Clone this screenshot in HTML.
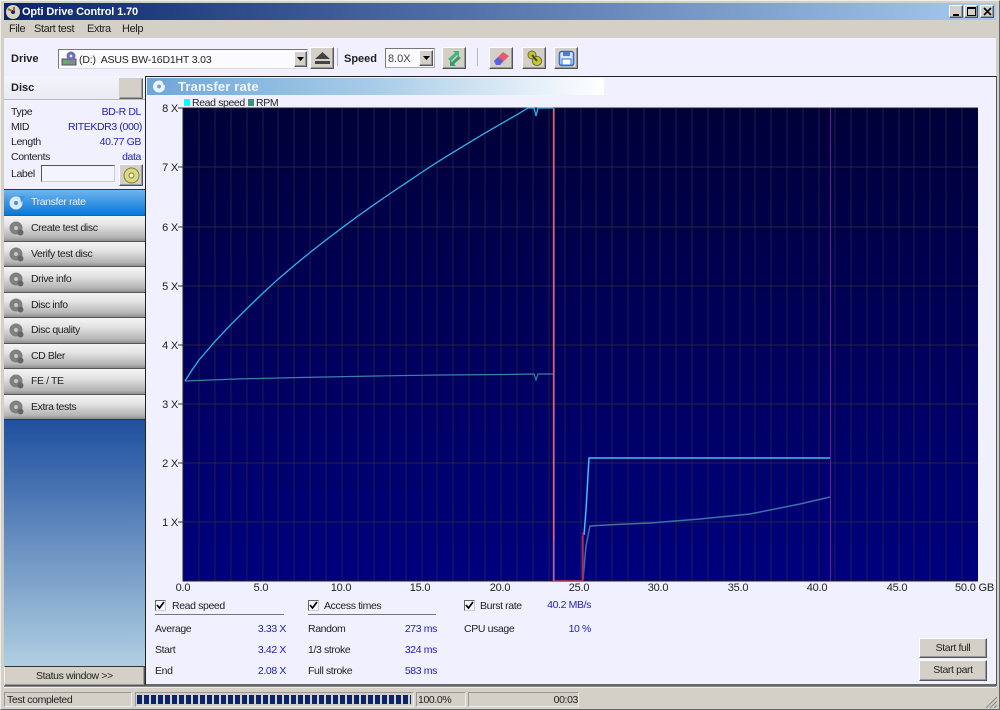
<!DOCTYPE html>
<html><head><meta charset="utf-8">
<style>
html{background:#d4d0c8}
html,body{margin:0;padding:0;width:1000px;height:710px;overflow:hidden}
body{position:relative;font-family:"Liberation Sans",sans-serif;font-size:11px;color:#111;background:#d4d0c8;filter:blur(0.35px)}
.a{position:absolute;box-sizing:border-box}
.t{position:absolute;white-space:nowrap;line-height:14px;height:14px;font-size:11px;color:#222;letter-spacing:-.38px}
.r{text-align:right}
.b{color:#2222bb}
.btn{position:absolute;box-sizing:border-box;background:#d4d0c8;border:1px solid;border-color:#fff #555 #555 #fff;box-shadow:inset -1px -1px 0 #999}
.nav{position:absolute;left:4px;width:141px;height:25.5px;background:linear-gradient(#f4f4f4 0%,#e4e4e4 35%,#b4b4b4 85%,#8f8f8f 100%);border-top:1px solid #555;box-sizing:border-box}
.nav .t{left:27px;top:5px;color:#222;font-size:10.5px;letter-spacing:-.4px}
.nav svg{position:absolute;left:5px;top:5px}
.chk{position:absolute;box-sizing:border-box;width:11px;height:11px;background:#f8f8ff;border:1px solid;border-color:#666 #ccc #ccc #666}
.chk svg{position:absolute;left:0;top:0}
.ylab{position:absolute;left:158px;width:20px;text-align:right;font-size:11px;line-height:14px;color:#222;white-space:nowrap;letter-spacing:-.2px}
.xlab{position:absolute;top:581px;width:40px;text-align:center;font-size:11px;line-height:14px;color:#222;letter-spacing:-.2px}
</style></head>
<body>
<!-- window frame -->
<div class="a" style="left:0;top:0;width:1000px;height:710px;border:1px solid #666;border-top-color:#eee;border-left-color:#eee"></div>
<!-- title bar -->
<div class="a" style="left:4px;top:3px;width:992px;height:17px;background:linear-gradient(90deg,#0a246a,#a6caf0)"></div>
<svg class="a" style="left:5px;top:4px" width="16" height="16"><circle cx="8" cy="8" r="7" fill="#d8d4c0"/><circle cx="8" cy="8" r="2" fill="#0a246a"/><path d="M3 5 L7 7 M9 3 L9 7" stroke="#a06030" stroke-width="2"/></svg>
<div class="t" style="left:22px;top:5px;color:#fff;font-weight:bold;font-size:11px;letter-spacing:-.14px">Opti Drive Control 1.70</div>
<div class="btn" style="left:949px;top:5px;width:14px;height:13px"><div class="a" style="left:3px;top:8px;width:6px;height:2px;background:#000"></div></div>
<div class="btn" style="left:964px;top:5px;width:14px;height:13px"><div class="a" style="left:2px;top:1px;width:9px;height:9px;border:1px solid #000;border-top-width:2px"></div></div>
<div class="btn" style="left:980px;top:5px;width:14px;height:13px"><svg class="a" style="left:2px;top:1px" width="9" height="9"><path d="M1 1 L8 8 M8 1 L1 8" stroke="#000" stroke-width="1.6"/></svg></div>
<!-- menu -->
<div class="t" style="left:9px;top:22px">File</div>
<div class="t" style="left:34px;top:22px">Start test</div>
<div class="t" style="left:87px;top:22px">Extra</div>
<div class="t" style="left:122px;top:22px">Help</div>
<!-- client bg -->
<div class="a" style="left:4px;top:38px;width:992px;height:647px;background:#f0f0ff"></div>
<!-- toolbar -->
<div class="t" style="left:11px;top:52px;font-weight:bold;color:#222;letter-spacing:0">Drive</div>
<div class="a" style="left:58px;top:49px;width:250px;height:20px;background:#fbfbff;border:1px solid;border-color:#777 #ddd #ddd #777"></div>
<svg class="a" style="left:61px;top:50px" width="16" height="17"><rect x="1" y="9" width="14" height="6" fill="#7f8f88" stroke="#556"/><circle cx="10" cy="6" r="4.5" fill="#6a6fb0"/><circle cx="10" cy="6" r="1.4" fill="#eee"/><rect x="3" y="11" width="3" height="2" fill="#4c4"/></svg>
<div class="t" style="left:79px;top:53px;font-size:10.5px;letter-spacing:-.17px">(D:)&nbsp; ASUS BW-16D1HT 3.03</div>
<div class="btn" style="left:294px;top:51px;width:13px;height:16px"><svg class="a" style="left:2px;top:5px" width="8" height="5"><path d="M0 0 H7 L3.5 4 Z" fill="#000"/></svg></div>
<div class="btn" style="left:310px;top:47px;width:24px;height:22px"><svg class="a" style="left:3px;top:4px" width="17" height="13"><path d="M8.5 0 L16 7 H1 Z" fill="#444"/><rect x="1" y="9" width="15" height="3" fill="#444"/></svg></div>
<div class="a" style="left:337px;top:48px;width:1px;height:18px;background:#bbb"></div>
<div class="t" style="left:344px;top:52px;font-weight:bold;color:#222;letter-spacing:0">Speed</div>
<div class="a" style="left:385px;top:48px;width:50px;height:20px;background:#fbfbff;border:1px solid;border-color:#777 #aaa #aaa #777"></div>
<div class="t" style="left:388px;top:52px;font-size:11px;color:#444;letter-spacing:0">8.0X</div>
<div class="btn" style="left:419px;top:50px;width:14px;height:16px"><svg class="a" style="left:3px;top:5px" width="8" height="5"><path d="M0 0 H7 L3.5 4 Z" fill="#000"/></svg></div>
<div class="btn" style="left:442px;top:47px;width:24px;height:22px"><svg class="a" style="left:3px;top:2px" width="17" height="17"><path d="M2 9 L9 3 L7 1 H13 V7 L11 5 L5 11 Z" fill="#3cb878"/><path d="M15 8 L8 14 L10 16 H4 V10 L6 12 L12 6 Z" fill="#3a9a6a"/></svg></div>
<div class="a" style="left:477px;top:48px;width:1px;height:18px;background:#b8b8b8"></div>
<div class="btn" style="left:489px;top:47px;width:24px;height:22px"><svg class="a" style="left:3px;top:2px" width="17" height="17"><path d="M1 11 L10 2 L16 6 L7 15 L3 15 Z" fill="#e85a70"/><path d="M1 11 L5 7 L10 11 L7 15 L3 15 Z" fill="#5566dd"/></svg></div>
<div class="btn" style="left:522px;top:47px;width:24px;height:22px"><svg class="a" style="left:3px;top:2px" width="17" height="17"><circle cx="6" cy="5" r="4" fill="#c8c820" stroke="#665"/><circle cx="11" cy="11" r="4.6" fill="#c8c820" stroke="#665"/><path d="M6 5 L11 11" stroke="#443" stroke-width="2"/></svg></div>
<div class="btn" style="left:554px;top:47px;width:24px;height:22px"><svg class="a" style="left:3px;top:2px" width="17" height="17"><rect x="1.5" y="1.5" width="14" height="14" rx="2" fill="#dfe8ff" stroke="#2a6fd8" stroke-width="1.6"/><rect x="5" y="2" width="7" height="4" fill="#4a7fd8"/><rect x="4" y="9" width="9" height="6" fill="#fff" stroke="#2a6fd8"/></svg></div>

<!-- left disc panel -->
<div class="a" style="left:4px;top:76px;width:141px;height:113px;background:#f0f0ff"></div>
<div class="a" style="left:4px;top:76px;width:141px;height:24px;background:linear-gradient(#f4f4fc,#eaeaf4);border-bottom:1px solid #bbb"></div>
<div class="t" style="left:11px;top:81px;font-weight:bold;color:#222;letter-spacing:0">Disc</div>
<div class="btn" style="left:119px;top:78px;width:24px;height:21px;border-color:#d4d0c8 #666 #666 #d4d0c8"></div>
<div class="t" style="left:11px;top:105px;font-size:10.5px">Type</div>
<div class="t" style="left:11px;top:120px;font-size:10.5px">MID</div>
<div class="t" style="left:11px;top:135px;font-size:10.5px">Length</div>
<div class="t" style="left:11px;top:150px;font-size:10.5px">Contents</div>
<div class="t" style="left:11px;top:167px;font-size:10.5px">Label</div>
<div class="t b r" style="left:60px;width:81px;top:105px;font-size:10.5px">BD-R DL</div>
<div class="t b r" style="left:50px;width:92px;top:120px;font-size:10.5px">RITEKDR3 (000)</div>
<div class="t b r" style="left:60px;width:81px;top:135px;font-size:10.5px">40.77 GB</div>
<div class="t b r" style="left:60px;width:81px;top:150px;font-size:10.5px">data</div>
<div class="a" style="left:41px;top:165px;width:74px;height:17px;background:#f4f4ff;border:1px solid;border-color:#555 #ccc #ccc #555"></div>
<div class="btn" style="left:119px;top:164px;width:24px;height:22px"><svg class="a" style="left:3px;top:2px" width="17" height="17"><circle cx="8.500" cy="8.500" r="7.500" fill="#dcdc70" stroke="#776"/><circle cx="8.500" cy="8.500" r="2.500" fill="#f4f4d0" stroke="#776"/></svg></div>

<!-- nav -->
<div class="nav" style="top:189px;background:linear-gradient(#6fb6ec 0%,#3a94e4 50%,#0a78d8 100%);border-top:1px solid #333"><svg width="16" height="16"><circle cx="7" cy="8" r="6.500" fill="#dfe8f8"/><circle cx="7" cy="8" r="2" fill="#3a94e4"/><path d="M11 1 L16 1 L12 8 Z" fill="#3a94e4"/></svg><div class="t" style="color:#e8f2ff">Transfer rate</div></div>
<div class="nav" style="top:215px"><svg width="16" height="16"><circle cx="7" cy="7" r="6.500" fill="#808080"/><circle cx="7" cy="7" r="2" fill="#c8c8c8"/><circle cx="11.500" cy="11.500" r="3" fill="#666"/></svg><div class="t">Create test disc</div></div>
<div class="nav" style="top:240.5px"><svg width="16" height="16"><circle cx="7" cy="7" r="6.500" fill="#808080"/><circle cx="7" cy="7" r="2" fill="#c8c8c8"/><circle cx="11.500" cy="11.500" r="3" fill="#666"/></svg><div class="t">Verify test disc</div></div>
<div class="nav" style="top:266px"><svg width="16" height="16"><circle cx="7" cy="7" r="6.500" fill="#808080"/><circle cx="7" cy="7" r="2" fill="#c8c8c8"/><circle cx="11.500" cy="11.500" r="3" fill="#666"/></svg><div class="t">Drive info</div></div>
<div class="nav" style="top:291.500px"><svg width="16" height="16"><circle cx="7" cy="7" r="6.500" fill="#808080"/><circle cx="7" cy="7" r="2" fill="#c8c8c8"/><circle cx="11.500" cy="11.500" r="3" fill="#666"/></svg><div class="t">Disc info</div></div>
<div class="nav" style="top:317px"><svg width="16" height="16"><circle cx="7" cy="7" r="6.500" fill="#808080"/><circle cx="7" cy="7" r="2" fill="#c8c8c8"/><circle cx="11.500" cy="11.500" r="3" fill="#666"/></svg><div class="t">Disc quality</div></div>
<div class="nav" style="top:342.500px"><svg width="16" height="16"><circle cx="7" cy="7" r="6.500" fill="#808080"/><circle cx="7" cy="7" r="2" fill="#c8c8c8"/><circle cx="11.500" cy="11.500" r="3" fill="#666"/></svg><div class="t">CD Bler</div></div>
<div class="nav" style="top:368px"><svg width="16" height="16"><circle cx="7" cy="7" r="6.500" fill="#808080"/><circle cx="7" cy="7" r="2" fill="#c8c8c8"/><circle cx="11.500" cy="11.500" r="3" fill="#666"/></svg><div class="t">FE / TE</div></div>
<div class="nav" style="top:393.500px"><svg width="16" height="16"><circle cx="7" cy="7" r="6.500" fill="#808080"/><circle cx="7" cy="7" r="2" fill="#c8c8c8"/><circle cx="11.500" cy="11.500" r="3" fill="#666"/></svg><div class="t">Extra tests</div></div>
<div class="a" style="left:4px;top:419px;width:141px;height:247px;background:linear-gradient(#1f4f9f,#b0cfe2);border-top:1px solid #333"></div>
<div class="btn" style="left:4px;top:666px;width:141px;height:20px;border-color:#333 #555 #555 #eee"></div>
<div class="t" style="left:36px;top:669px;font-size:10.5px">Status window &gt;&gt;</div>

<!-- main panel -->
<div class="a" style="left:145px;top:76px;width:852px;height:610px;border:1px solid #222;border-bottom:2px solid #666;border-right:1px solid #555"></div>
<div class="a" style="left:147px;top:78px;width:457px;height:17px;background:linear-gradient(90deg,#6fa6d8,#a8cce8 50%,#ffffff)"></div>
<svg class="a" style="left:152px;top:79px" width="15" height="15"><circle cx="7" cy="7.500" r="6" fill="#eef4ff"/><circle cx="7" cy="7.500" r="2" fill="#6fa6d8"/><path d="M10 1 L15 1 L12 7 Z" fill="#6fa6d8"/></svg>
<div class="t" style="left:178px;top:79px;font-weight:bold;font-size:13px;color:#f0f6ff;line-height:15px;height:15px;letter-spacing:.15px">Transfer rate</div>

<!-- legend -->
<div class="a" style="left:184px;top:99px;width:6px;height:7px;background:#00ffff"></div>
<div class="t" style="left:192px;top:96px;font-size:10.5px">Read speed</div>
<div class="a" style="left:248px;top:99px;width:6px;height:7px;background:#3f8f80"></div>
<div class="t" style="left:256px;top:96px;font-size:10.5px">RPM</div>

<!-- chart -->
<svg class="a" style="left:176px;top:100px" width="810" height="490">
<defs><linearGradient id="g" x1="0" y1="0" x2="0" y2="1"><stop offset="0" stop-color="#000038"/><stop offset="1" stop-color="#00007f"/></linearGradient></defs>
<rect x="7" y="8" width="795" height="473" fill="url(#g)"/>
<g stroke="#1e1e4c" stroke-width="1" fill="none" shape-rendering="crispEdges">
<path d="M23 8V481M39 8V481M55 8V481M71 8V481M87 8V481M102 8V481M118 8V481M134 8V481M150 8V481M166 8V481M182 8V481M198 8V481M214 8V481M230 8V481M246 8V481M261 8V481M277 8V481M293 8V481M309 8V481M325 8V481M341 8V481M357 8V481M373 8V481M389 8V481M405 8V481M420 8V481M436 8V481M452 8V481M468 8V481M484 8V481M500 8V481M516 8V481M532 8V481M548 8V481M564 8V481M579 8V481M595 8V481M611 8V481M627 8V481M643 8V481M659 8V481M675 8V481M691 8V481M707 8V481M723 8V481M738 8V481M754 8V481M770 8V481M786 8V481"/>
<path d="M7 67H802M7 127H802M7 186H802M7 245H802M7 304H802M7 363H802M7 422H802" stroke="#26243e"/>
</g>
<path d="M2 8H7M2 67H7M2 127H7M2 186H7M2 245H7M2 304H7M2 363H7M2 422H7" stroke="#333" fill="none" shape-rendering="crispEdges"/>
<path d="M7 8V481H802" stroke="#222" fill="none" shape-rendering="crispEdges"/>
<path d="M7 8H802" stroke="#223" fill="none" shape-rendering="crispEdges"/>
<!-- rpm -->
<polyline fill="none" stroke="#3f7fa0" stroke-width="1.200" points="9,281 60,279 124,277.500 200,276 264,275 330,274.500 358,274 360,280 362,274 377,274"/>
<polyline fill="none" stroke="#3f6fa8" stroke-width="1.500" points="407,480 410,446 414,426 440,424.500 474,423 524,419 574,414 624,404 654,397"/>
<!-- red -->
<path d="M377.500 8V481H406.500V436" fill="none" stroke="#c83044" stroke-width="1.500"/>
<path d="M378 8V440" fill="none" stroke="#f09090" stroke-width="1"/>
<path d="M378 440V481" fill="none" stroke="#a090e0" stroke-width="1"/>
<!-- read speed -->
<polyline fill="none" stroke="#30b4ea" stroke-width="1.300" points="9,281 16,270 23,260 39,241.400 55,224.400 71,208.500 86.500,193.500 102,179.200 118,165.600 134,152.500 150,140 166,127.800 182,116 198,104.700 214,93.600 230,82.900 245.500,72.500 261,62.300 277,52.400 293,42.700 309,33.100 325,23.800 341,14.700 352,8 358,8 360,16 362,8 377,8"/>
<polyline fill="none" stroke="#40c0f4" stroke-width="1.500" points="408,435 410,410 412,375 413,358 654,358"/>
<path d="M407 480V432" stroke="#a02868" stroke-width="1.500" fill="none"/>
<!-- purple -->
<path d="M654.500 8V481" stroke="#6a2088" stroke-width="1" fill="none"/>
</svg>
<div class="ylab" style="top:102px">8 X</div>
<div class="ylab" style="top:161px">7 X</div>
<div class="ylab" style="top:221px">6 X</div>
<div class="ylab" style="top:280px">5 X</div>
<div class="ylab" style="top:339px">4 X</div>
<div class="ylab" style="top:398px">3 X</div>
<div class="ylab" style="top:457px">2 X</div>
<div class="ylab" style="top:516px">1 X</div>
<div class="xlab" style="left:163px">0.0</div>
<div class="xlab" style="left:241px">5.0</div>
<div class="xlab" style="left:321px">10.0</div>
<div class="xlab" style="left:400px">15.0</div>
<div class="xlab" style="left:480px">20.0</div>
<div class="xlab" style="left:559px">25.0</div>
<div class="xlab" style="left:638px">30.0</div>
<div class="xlab" style="left:718px">35.0</div>
<div class="xlab" style="left:797px">40.0</div>
<div class="xlab" style="left:877px">45.0</div>
<div class="xlab" style="left:955px;width:44px;text-align:left">50.0 GB</div>

<!-- stats -->
<div class="chk" style="left:155px;top:600px"><svg width="9" height="9"><path d="M1 4 L3.500 7 L8 1" stroke="#000" stroke-width="1.700" fill="none"/></svg></div>
<div class="t" style="left:172px;top:599px;font-size:10.5px">Read speed</div>
<div class="a" style="left:155px;top:614px;width:129px;height:1px;background:#777"></div>
<div class="t" style="left:155px;top:622px;font-size:10.5px">Average</div>
<div class="t" style="left:155px;top:643px;font-size:10.5px">Start</div>
<div class="t" style="left:155px;top:664px;font-size:10.5px">End</div>
<div class="t b r" style="left:225px;width:61px;top:622px;font-size:10.5px">3.33 X</div>
<div class="t b r" style="left:225px;width:61px;top:643px;font-size:10.5px">3.42 X</div>
<div class="t b r" style="left:225px;width:61px;top:664px;font-size:10.5px">2.08 X</div>

<div class="chk" style="left:308px;top:600px"><svg width="9" height="9"><path d="M1 4 L3.500 7 L8 1" stroke="#000" stroke-width="1.700" fill="none"/></svg></div>
<div class="t" style="left:324px;top:599px;font-size:10.5px">Access times</div>
<div class="a" style="left:308px;top:614px;width:128px;height:1px;background:#777"></div>
<div class="t" style="left:308px;top:622px;font-size:10.5px">Random</div>
<div class="t" style="left:308px;top:643px;font-size:10.5px">1/3 stroke</div>
<div class="t" style="left:308px;top:664px;font-size:10.5px">Full stroke</div>
<div class="t b r" style="left:380px;width:57px;top:622px;font-size:10.5px">273 ms</div>
<div class="t b r" style="left:380px;width:57px;top:643px;font-size:10.5px">324 ms</div>
<div class="t b r" style="left:380px;width:57px;top:664px;font-size:10.5px">583 ms</div>

<div class="chk" style="left:464px;top:600px"><svg width="9" height="9"><path d="M1 4 L3.500 7 L8 1" stroke="#000" stroke-width="1.700" fill="none"/></svg></div>
<div class="t" style="left:480px;top:599px;font-size:10.5px">Burst rate</div>
<div class="t" style="left:464px;top:622px;font-size:10.5px">CPU usage</div>
<div class="t b r" style="left:530px;width:61px;top:598px;font-size:10.5px">40.2 MB/s</div>
<div class="t b r" style="left:530px;width:61px;top:622px;font-size:10.5px">10 %</div>

<div class="btn" style="left:919px;top:638px;width:68px;height:20px"></div>
<div class="t" style="left:919px;width:68px;top:641px;text-align:center;font-size:10.5px">Start full</div>
<div class="btn" style="left:919px;top:660px;width:68px;height:21px"></div>
<div class="t" style="left:919px;width:68px;top:663px;text-align:center;font-size:10.5px">Start part</div>

<!-- status bar -->
<div class="a" style="left:4px;top:686px;width:992px;height:2px;background:#888;border-bottom:1px solid #eee"></div>
<div class="a" style="left:4px;top:692px;width:128px;height:15px;border:1px solid;border-color:#999 #eee #eee #999"></div>
<div class="t" style="left:7px;top:693px;font-size:10.5px">Test completed</div>
<div class="a" style="left:135px;top:692px;width:279px;height:15px;border:1px solid;border-color:#999 #eee #eee #999;padding:2px"></div>
<div class="a" style="left:137px;top:695px;width:274px;height:9px;background:repeating-linear-gradient(90deg,#0a246a 0,#0a246a 5px,#d4d0c8 5px,#d4d0c8 7px)"></div>
<div class="a" style="left:416px;top:692px;width:50px;height:15px;border:1px solid;border-color:#999 #eee #eee #999"></div>
<div class="t" style="left:418px;top:693px;font-size:10.5px">100.0%</div>
<div class="a" style="left:468px;top:692px;width:111px;height:15px;border:1px solid;border-color:#999 #eee #eee #999"></div>
<div class="t r" style="left:500px;width:78px;top:693px;font-size:10.5px">00:03</div>
<svg class="a" style="left:985px;top:696px" width="13" height="13"><path d="M12 1 L1 12 M12 5 L5 12 M12 9 L9 12" stroke="#888" fill="none"/></svg>
</body></html>
